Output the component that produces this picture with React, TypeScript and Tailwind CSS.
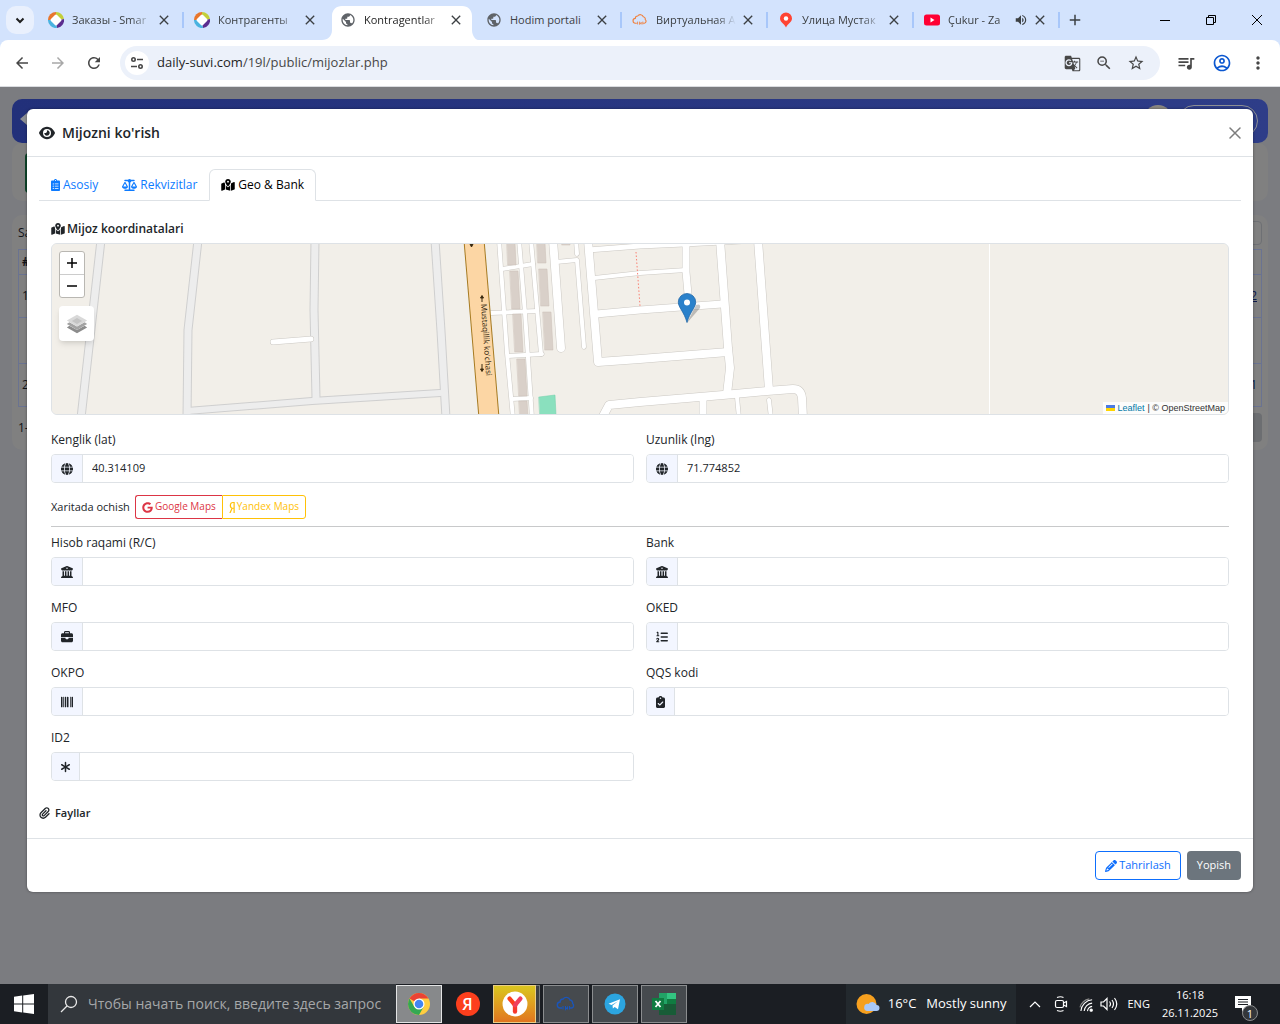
import type { ReactNode } from 'react';
import clsx from 'clsx';
import type { IconType } from 'react-icons';
import {
  FaAsterisk,
  FaBarcode,
  FaBriefcase,
  FaBuildingColumns,
  FaClipboardCheck,
  FaEye,
  FaGlobe,
  FaGoogle,
  FaListOl,
  FaMapLocationDot,
  FaPaperclip,
  FaPencil,
  FaScaleBalanced,
  FaYandex,
} from 'react-icons/fa6';
import { FaClipboardList } from 'react-icons/fa';
import {
  MdAdd,
  MdArrowBack,
  MdArrowForward,
  MdClose,
  MdGTranslate,
  MdMoreVert,
  MdOutlineAccountCircle,
  MdPublic,
  MdQueueMusic,
  MdRefresh,
  MdStarBorder,
  MdVolumeUp,
  MdZoomOut,
} from 'react-icons/md';

/* ---------- Browser tabs ---------- */

function SmartupIcon() {
  return (
    <svg viewBox="0 0 16 16" className="size-4">
      <path d="M0 8a8 8 0 0 1 8-8v4L4 8z" fill="#e8762d" />
      <path d="M8 0a8 8 0 0 1 8 7l-4 1-4-4z" fill="#c3cf3a" />
      <path d="M16 7a8 8 0 0 1-7 9l-1-4 4-4z" fill="#5b2d90" />
      <path d="M9 16a8 8 0 0 1-9-8l4 0 4 4z" fill="#4ab3e0" />
      <path d="M8 4l4 4-4 4-4-4z" fill="#fff" stroke="#fff" strokeWidth="3" strokeLinejoin="round" />
    </svg>
  );
}

function CloudIcon({ color }: { color: string }) {
  return (
    <svg viewBox="0 0 20 20" className="size-full" fill="none" stroke={color} strokeWidth="1.4">
      <path d="M6 14H4.500a3 3 0 0 1-.4-6 3 3 0 0 1 3-3 4 4 0 0 1 7 1 3 3 0 0 1 2.500 3.500A2.500 2.500 0 0 1 15.500 14H14" />
      <path d="M7 12v3.500M9.500 12v3.500l2-2.500v2.500M13.500 12v3.500" strokeWidth="1.100" />
    </svg>
  );
}

function PinIcon() {
  return (
    <svg viewBox="0 0 16 16" className="size-4">
      <path d="M8 .500a6 6 0 0 1 6 6c0 4-4.500 5-6 9-1.500-4-6-5-6-9a6 6 0 0 1 6-6z" fill="#ff4433" />
      <circle cx="8" cy="6.500" r="2.200" fill="#fff" />
    </svg>
  );
}

function YoutubeIcon() {
  return (
    <svg viewBox="0 0 16 16" className="size-4">
      <rect y="2.500" width="16" height="11" rx="2.500" fill="#f03" />
      <path d="M6.500 5.500v5l4-2.500z" fill="#fff" />
    </svg>
  );
}

interface BrowserTab {
  title: string;
  icon: ReactNode;
  active?: boolean;
  sound?: boolean;
  divider?: boolean;
}

const browserTabs: BrowserTab[] = [
  { title: 'Заказы - Smar', icon: <SmartupIcon />, divider: true },
  { title: 'Контрагенты', icon: <SmartupIcon /> },
  { title: 'Kontragentlar', icon: <MdPublic className="size-4 text-[#5f6368]" />, active: true },
  { title: 'Hodim portali', icon: <MdPublic className="size-4 text-[#5f6368]" />, divider: true },
  { title: 'Виртуальная А', icon: <CloudIcon color="#f0803c" />, divider: true },
  { title: 'Улица Мустак', icon: <PinIcon />, divider: true },
  { title: 'Çukur - Za', icon: <YoutubeIcon />, sound: true, divider: true },
];

function TabStrip() {
  return (
    <div className="flex h-10 items-stretch bg-[#d3e3fd] text-[11px] text-[#3c4043]">
      <button aria-label="Search tabs" className="m-[6px] mr-1 grid size-7 place-items-center rounded-[10px] bg-[#e9f0fd]">
        <svg viewBox="0 0 10 10" className="size-[10px]" fill="none" stroke="#1f1f1f" strokeWidth="2">
          <path d="M1.500 3.500L5 7l3.500-3.500" />
        </svg>
      </button>
      {browserTabs.map((tab) => (
        <div key={tab.title} className="relative flex max-w-[146px] min-w-0 flex-1">
          {tab.active && (
            <svg viewBox="0 0 156 34" preserveAspectRatio="none" className="absolute -left-2 bottom-0 h-[34px] w-[156px]">
              <path d="M0 34c6 0 10-4 10-10V10C10 4 14 0 20 0h120c6 0 10 4 10 10v14c0 6 4 10 6 10z" fill="#fff" />
            </svg>
          )}
          <div className="relative flex min-w-0 flex-1 items-center pl-[10px] pr-3">
            <span className="size-4 shrink-0">{tab.icon}</span>
            <span
              className={clsx(
                'ml-2 min-w-0 flex-1 overflow-hidden whitespace-nowrap',
                tab.title !== 'Hodim portali' && '[mask-image:linear-gradient(to_right,#000_75%,transparent)]',
                tab.active && 'text-[#1f1f1f]',
              )}
            >
              {tab.title}
            </span>
            {tab.sound && <MdVolumeUp className="size-[14px] shrink-0" />}
            <button aria-label="Close tab" className="ml-1 shrink-0">
              <MdClose className="size-4" />
            </button>
          </div>
          {tab.divider && <span className="absolute right-0 top-3 h-4 w-[2px] bg-[#a8c7fa]" />}
        </div>
      ))}
      <button aria-label="New tab" className="grid w-[30px] place-items-center">
        <MdAdd className="size-[18px]" />
      </button>
      <div className="ml-auto flex text-black">
        <button aria-label="Minimize" className="grid w-[46px] place-items-center">
          <span className="h-px w-[10px] bg-black" />
        </button>
        <button aria-label="Restore" className="grid w-[46px] place-items-center">
          <svg viewBox="0 0 10 10" className="size-[10px]" fill="none" stroke="currentColor">
            <path d="M.500 2.500h7v7h-7zM2.500 2.500v-2h7v7h-2" />
          </svg>
        </button>
        <button aria-label="Close" className="grid w-[46px] place-items-center">
          <svg viewBox="0 0 10 10" className="size-[10px]" stroke="currentColor">
            <path d="M0 0l10 10M10 0L0 10" />
          </svg>
        </button>
      </div>
    </div>
  );
}

function IconButton({ label, className, children }: { label: string; className?: string; children: ReactNode }) {
  return (
    <button aria-label={label} className={clsx('grid h-8 shrink-0 place-items-center', className ?? 'w-9')}>
      {children}
    </button>
  );
}

function Toolbar() {
  return (
    <div className="bg-[#d3e3fd]">
      <div className="flex h-[47px] items-center rounded-t-lg border-b border-[#dadce0] bg-white px-1 text-[#474747]">
        <IconButton label="Back"><MdArrowBack className="size-[18px]" /></IconButton>
        <IconButton label="Forward"><MdArrowForward className="size-[18px] text-[#a8a8a8]" /></IconButton>
        <IconButton label="Reload"><MdRefresh className="size-[18px]" /></IconButton>
        <div className="mx-2 flex h-[34px] min-w-0 flex-1 items-center rounded-full bg-[#ecf1fa] px-[5px] pr-2">
          <button aria-label="Site information" className="grid size-6 shrink-0 place-items-center rounded-full bg-white">
            <svg viewBox="0 0 14 14" className="size-[14px]" fill="none" stroke="#474747" strokeWidth="1.600">
              <circle cx="3.500" cy="3.500" r="1.700" />
              <path d="M7 3.500h6M1 10.500h6" />
              <circle cx="10.500" cy="10.500" r="1.700" />
            </svg>
          </button>
          <span className="ml-2 flex-1 overflow-hidden whitespace-nowrap text-[13px] text-[#474747]">
            <span className="text-[#1f1f1f]">daily-suvi.com</span>/19l/public/mijozlar.php
          </span>
          <IconButton label="Translate" className="w-8"><MdGTranslate className="size-[17px]" /></IconButton>
          <IconButton label="Zoom" className="w-8"><MdZoomOut className="size-[18px]" /></IconButton>
          <IconButton label="Bookmark" className="w-8"><MdStarBorder className="size-[18px]" /></IconButton>
        </div>
        <IconButton label="Media"><MdQueueMusic className="size-5" /></IconButton>
        <IconButton label="Profile"><MdOutlineAccountCircle className="size-5 text-[#0b57d0]" /></IconButton>
        <IconButton label="Menu"><MdMoreVert className="size-5" /></IconButton>
      </div>
    </div>
  );
}

/* ---------- Dimmed page under the dialog ---------- */

function Backdrop() {
  return (
    <div className="px-3 pt-3 text-xs text-[#111318]" aria-hidden="true">
      <div className="flex h-11 justify-between rounded-[10px] bg-gradient-to-r from-[#22307a] to-[#2e3d88] pl-2 pr-[10px]">
        <svg viewBox="0 0 20 16" className="mt-3 h-4 w-5" fill="#8d8f94">
          <path d="M0 8l7-6v4h12v4H7v4z" />
        </svg>
        <div className="flex gap-[6px] pt-[6px]">
          <span className="h-7 w-7 rounded-full bg-[#8a8780]" />
          <span className="h-8 w-20 rounded-full border border-[#8d8f94]" />
        </div>
      </div>
      <div className="h-[58px] rounded-[10px] bg-[#808080] px-[13px] pt-[10px]">
        <div className="h-10 w-20 rounded bg-[#0d4429]" />
      </div>
      <div className="mt-[14px] rounded-[10px] bg-[#808080] px-[6px] pb-2 pt-1">
        <div className="flex h-7 items-center justify-between">
          <span>Sa</span>
          <span className="h-6 w-20 rounded border border-[#6e7074]" />
        </div>
        <table className="mt-[2px] w-full border border-[#6a7391]">
          <tbody>
            <tr className="h-[25px] border-b border-[#6a7391] font-bold"><td className="pl-[3px]">#</td></tr>
            <tr className="h-[43px] border-b border-[#6a7391]"><td className="pl-[3px]">1</td><td className="pr-1 text-right text-[#0d1a4d] underline">2</td></tr>
            <tr className="h-[46px] border-b border-[#6a7391]"><td /></tr>
            <tr className="h-[43px]"><td className="pl-[3px]">2</td><td className="pr-1 text-right text-[#0d1a4d]">1</td></tr>
          </tbody>
        </table>
        <div className="mt-[6px] flex h-[29px] items-center justify-between">
          <span>1-</span>
          <span className="h-[29px] w-10 rounded bg-[#6c6e71]" />
        </div>
      </div>
    </div>
  );
}

/* ---------- Map ---------- */

const greyRoads = [
  { d: 'M101 240L81 418', w: 8 },
  { d: 'M198 240L188 330L187 418', w: 8 },
  { d: 'M315 240L314 310L316 398', w: 8 },
  { d: 'M435 240L441 331L446 418', w: 8 },
  { d: 'M187 411L312 401L440 393', w: 7 },
];

const whiteRoads = [
  { d: 'M273 342L311 339', w: 5 },
  { d: 'M499 240L507 353L513 418', w: 4 },
  { d: 'M519 240L525 313L532 418', w: 4 },
  { d: 'M531 240L541 354', w: 4 },
  { d: 'M502 269L533 264', w: 4 },
  { d: 'M491 313L537 311', w: 4 },
  { d: 'M508 356L542 354', w: 4 },
  { d: 'M512 399L531 398', w: 4 },
  { d: 'M553 240L561 348', w: 8 },
  { d: 'M556 262L577 260L584 347', w: 4 },
  { d: 'M576 240L577 254', w: 4 },
  { d: 'M588 240L598 362L640 359L728 352', w: 8 },
  { d: 'M588 250L640 246L684 244L742 241', w: 5 },
  { d: 'M594 278L640 273L686 270', w: 4 },
  { d: 'M596 314L640 310L722 304', w: 7 },
  { d: 'M686 242L686 272L689 305', w: 7 },
  { d: 'M720 240L728 348L730 368L727 394', w: 8 },
  { d: 'M758 240L769 390', w: 8 },
  { d: 'M602 418L609 405L640 402L723 395L767 391L793 389Q801 389 802 398L803 418', w: 8 },
  { d: 'M703 400L703 418', w: 7 },
  { d: 'M737 397L739 418', w: 4 },
  { d: 'M769 400L771 418', w: 4 },
];

const buildings = [
  'M507 243h8l1 22h-8z',
  'M510 271h8l2 38h-8z',
  'M513 314h8l2 38h-8z',
  'M517 359h8l2 37h-8z',
  'M519 401h8l1 16h-8z',
  'M537 243h8l1 20h-8z',
  'M539 269h8l2 37h-8z',
  'M543 312h8l2 38h-8z',
  'M562 240h8v5h-8z',
];

function MapCanvas() {
  return (
    <svg viewBox="52 244 1176 170" preserveAspectRatio="xMidYMid slice" className="block size-full" fill="none">
      <rect x="52" y="244" width="1176" height="170" fill="#f2efe9" />
      <g strokeLinecap="round" strokeLinejoin="round">
        {greyRoads.map((r) => <path key={r.d} d={r.d} stroke="#cfcfcf" strokeWidth={r.w + 1} />)}
        {greyRoads.map((r) => <path key={r.d} d={r.d} stroke="#ededed" strokeWidth={r.w - 1} />)}
        {whiteRoads.map((r) => <path key={r.d} d={r.d} stroke="#cbc8c3" strokeWidth={r.w + 1} />)}
        {whiteRoads.map((r) => <path key={r.d} d={r.d} stroke="#fff" strokeWidth={r.w} />)}
        {buildings.map((d) => <path key={d} d={d} fill="#d9d0c9" stroke="#cabfb6" strokeWidth=".500" />)}
        <path d="M539 397l16-2 1 20h-16z" fill="#8ae0be" stroke="#6fcfa9" strokeWidth=".500" />
      </g>
      <path d="M474 240L489 418" stroke="#a67a20" strokeWidth="21" />
      <path d="M474 240L489 418" stroke="#fcd6a4" strokeWidth="19" />
      <path d="M636 252L640 306" stroke="#fa8072" strokeDasharray="1.500 2" />
      <path d="M989.500 244V414" stroke="#fff" />
      <g stroke="#3a2a10" fill="#3a2a10">
        <path d="M482 302V297M480.500 298L482 295.500L483.500 298z" />
        <path d="M482 364V369M480.500 369L482 371.500L483.500 369z" />
        <path d="M470 244L473 244L471.500 247z" />
      </g>
      <text transform="translate(481 304) rotate(86)" fill="#2b2009" className="font-['Open_Sans',sans-serif] text-[8px]">
        Mustaqillik ko'chasi
      </text>
      <path d="M687 323L700 308Q701 303 696 305Z" fill="#000" opacity=".22" />
      <path d="M687 293.500a8.700 8.700 0 0 1 8.700 8.700c0 5-6 10-8.700 20.300-2.700-10.300-8.700-15.300-8.700-20.300a8.700 8.700 0 0 1 8.700-8.700z" fill="#2a81cb" stroke="#2569a8" strokeWidth=".800" />
      <circle cx="687" cy="302.500" r="3" fill="#fff" />
    </svg>
  );
}

function LeafletMap() {
  return (
    <div className="relative h-[172px] overflow-hidden rounded-md border border-[#dee2e6] bg-[#f2efe9]">
      <MapCanvas />
      <div className="absolute left-[7px] top-[7px] flex flex-col">
        <div className="flex w-[26px] flex-col overflow-hidden rounded-[3px] border border-[#b9b7b2] bg-white text-black">
          <button aria-label="Zoom in" className="grid h-[23px] place-items-center border-b border-[#ccc]">
            <svg viewBox="0 0 10 10" className="size-[10px]" stroke="currentColor" strokeWidth="1.500"><path d="M0 5h10M5 0v10" /></svg>
          </button>
          <button aria-label="Zoom out" className="grid h-[22px] place-items-center">
            <svg viewBox="0 0 10 10" className="size-[10px]" stroke="currentColor" strokeWidth="1.300"><path d="M0 5h10" /></svg>
          </button>
        </div>
        <button aria-label="Layers" className="mt-2 grid size-[35px] place-items-center rounded bg-white shadow-md">
          <svg viewBox="0 0 26 26" className="size-[22px]">
            <path d="M1 17l12 7 12-7-3-2-9 5-9-5z" fill="#8c8c8c" />
            <path d="M1 13l12 7 12-7-3-2-9 5-9-5z" fill="#a3a3a3" />
            <path d="M13 2l12 7-12 7L1 9z" fill="#d9d9d9" />
            <path d="M13 6l6 3.500-6 3.500-6-3.500z" fill="#c4c4c4" />
          </svg>
        </button>
      </div>
      <div className="absolute bottom-0 right-0 flex h-3 items-center bg-white/80 px-[3px] font-['Liberation_Sans',Arial,sans-serif] text-[9px] text-[#333]">
        <svg viewBox="0 0 9 6" className="mr-[2px] h-[6px] w-[9px]">
          <path fill="#4c7be1" d="M0 0h9v3H0z" />
          <path fill="#ffd500" d="M0 3h9v3H0z" />
        </svg>
        <a href="#leaflet" className="text-[#0078a8]">Leaflet</a>
        <span className="ml-[3px]">| © OpenStreetMap</span>
      </div>
    </div>
  );
}

/* ---------- Dialog ---------- */

interface FieldProps {
  id: string;
  label: string;
  icon: IconType;
  value?: string;
  narrow?: boolean;
}

function Field({ id, label, icon: Icon, value = '', narrow }: FieldProps) {
  return (
    <div>
      <label htmlFor={id} className="mb-[5px] block leading-[18px]">{label}</label>
      <div className="flex h-[29px] overflow-hidden rounded border border-[#dee2e6]">
        <span className="flex items-center border-r border-[#dee2e6] bg-[#f3f6ff] px-[9px]">
          <Icon className={clsx('h-3', narrow ? 'w-[9px]' : 'w-3')} />
        </span>
        <input id={id} type="text" readOnly defaultValue={value} className="min-w-0 flex-1 bg-white px-[9px] text-[11px] outline-none" />
      </div>
    </div>
  );
}

const coordFields: FieldProps[] = [
  { id: 'lat', label: 'Kenglik (lat)', icon: FaGlobe, value: '40.314109' },
  { id: 'lng', label: 'Uzunlik (lng)', icon: FaGlobe, value: '71.774852' },
];

const bankFields: FieldProps[] = [
  { id: 'rc', label: 'Hisob raqami (R/C)', icon: FaBuildingColumns },
  { id: 'bank', label: 'Bank', icon: FaBuildingColumns },
  { id: 'mfo', label: 'MFO', icon: FaBriefcase },
  { id: 'oked', label: 'OKED', icon: FaListOl },
  { id: 'okpo', label: 'OKPO', icon: FaBarcode },
  { id: 'qqs', label: 'QQS kodi', icon: FaClipboardCheck, narrow: true },
  { id: 'id2', label: 'ID2', icon: FaAsterisk, narrow: true },
];

const tabs = [
  { label: 'Asosiy', icon: FaClipboardList, iconClass: 'w-[9px]' },
  { label: 'Rekvizitlar', icon: FaScaleBalanced, iconClass: 'w-[15px]' },
  { label: 'Geo & Bank', icon: FaMapLocationDot, iconClass: 'w-[14px]', active: true },
];

function CustomerDialog() {
  return (
    <div role="dialog" aria-labelledby="dialog-title" className="absolute inset-x-[27px] top-[22px] rounded-md bg-white text-xs text-[#212529] shadow-[0_0_3px_rgba(0,0,0,0.4)]">
      <div className="flex h-12 items-center border-b border-[#dee2e6] px-3">
        <FaEye className="size-4" />
        <h5 id="dialog-title" className="ml-[7px] text-sm font-semibold">Mijozni ko'rish</h5>
        <button aria-label="Close" className="ml-auto grid w-3 place-items-center text-[#7d7d7d]">
          <svg viewBox="0 0 12 12" className="size-3" stroke="currentColor" strokeWidth="1.500" strokeLinecap="round"><path d="M1 1l10 10M11 1L1 11" /></svg>
        </button>
      </div>

      <div className="px-3 pt-3">
        <div role="tablist" className="flex h-8 border-b border-[#dee2e6]">
          {tabs.map(({ label, icon: Icon, iconClass, active }) => (
            <button
              key={label}
              role="tab"
              aria-selected={!!active}
              className={clsx(
                '-mb-px flex items-center gap-[3px] rounded-t-md border px-[11px]',
                active ? 'border-[#dee2e6] border-b-white bg-white text-black' : 'border-transparent text-[#0d7bff]',
              )}
            >
              <Icon className={clsx('h-3', iconClass)} />
              {label}
            </button>
          ))}
        </div>

        <div className="px-3 pt-[19px]">
          <h6 className="mb-[5px] flex items-center gap-[2px] font-semibold leading-[18px]">
            <FaMapLocationDot className="h-3 w-[14px]" />
            Mijoz koordinatalari
          </h6>
          <LeafletMap />
          <div className="mt-4 grid grid-cols-2 gap-x-3">
            {coordFields.map((f) => <Field key={f.id} {...f} />)}
          </div>
          <div className="mt-3 flex h-6 items-center gap-[5px] text-[11px]">
            Xaritada ochish
            <div className="flex h-6 text-[10px]">
              <a href="#google" className="flex items-center gap-[2px] rounded-l-[3px] border border-r-0 border-[#dc3545] px-[6px] text-[#dc3545]">
                <FaGoogle className="size-[11px]" />
                Google Maps
              </a>
              <a href="#yandex" className="flex items-center gap-[2px] rounded-r-[3px] border border-[#ffc107] px-[6px] text-[#ffc107]">
                <FaYandex className="h-[11px] w-[6px]" />
                Yandex Maps
              </a>
            </div>
          </div>
          <hr className="my-[7px] border-[#c8c9ca]" />
          <div className="grid grid-cols-2 gap-x-3 gap-y-[13px]">
            {bankFields.map((f) => <Field key={f.id} {...f} />)}
          </div>
        </div>

        <h6 className="mb-4 mt-[23px] flex items-center gap-[5px] text-[11px] font-semibold leading-[18px]">
          <FaPaperclip className="h-3 w-[11px]" />
          Fayllar
        </h6>
      </div>

      <div className="flex justify-end gap-[6px] border-t border-[#dee2e6] p-3 text-[11px]">
        <button className="flex h-[29px] items-center gap-[2px] rounded border border-[#0d6efd] px-[9px] text-[#0d6efd]">
          <FaPencil className="size-3" />
          Tahrirlash
        </button>
        <button className="h-[29px] rounded bg-[#6c757d] px-[10px] text-white">Yopish</button>
      </div>
    </div>
  );
}

/* ---------- Taskbar ---------- */

function ChromeLogo() {
  return (
    <svg viewBox="0 0 24 24" className="size-6">
      <circle cx="12" cy="12" r="11" fill="#ffcd40" />
      <path d="M12 12L2.500 6.500A11 11 0 0 1 21.500 6.500H12z" fill="#ea4335" />
      <path d="M2.500 6.500A11 11 0 0 0 12 23l4.700-8.300L12 17l-4.700-2.300z" fill="#34a853" />
      <circle cx="12" cy="12" r="5.500" fill="#fff" />
      <circle cx="12" cy="12" r="4.300" fill="#4285f4" />
    </svg>
  );
}

function TaskButton({ label, className, children }: { label: string; className: string; children: ReactNode }) {
  return (
    <button aria-label={label} className={clsx('grid h-[38px] place-items-center border', className)}>
      {children}
    </button>
  );
}

function Taskbar() {
  return (
    <div className="flex h-10 items-center bg-[#1b1e23] text-white">
      <button aria-label="Start" className="grid w-12 place-items-center">
        <svg viewBox="0 0 20 20" className="size-5" fill="#fff">
          <path d="M0 2.800l8.200-1.200v7.900H0zM9.200 1.500L20 0v9.500H9.200zM0 10.500h8.200v7.900L0 17.200zM9.200 10.500H20V20L9.200 18.500z" />
        </svg>
      </button>
      <label className="flex h-10 w-[348px] items-center bg-[#33373c]">
        <svg viewBox="0 0 18 18" className="ml-3 size-[18px] shrink-0" fill="none" stroke="#e8e8e8" strokeWidth="1.300">
          <circle cx="11" cy="7" r="5.500" />
          <path d="M7 11L1 17" />
        </svg>
        <input
          type="text"
          aria-label="Поиск"
          placeholder="Чтобы начать поиск, введите здесь запрос"
          className="ml-[10px] min-w-0 flex-1 bg-transparent text-sm outline-none placeholder:text-[#a5a7a9]"
        />
      </label>
      <TaskButton label="Chrome" className="w-[46px] border-[#e3e4e5] bg-[#87898b]"><ChromeLogo /></TaskButton>
      <TaskButton label="Яндекс" className="w-[51px] border-transparent">
        <span className="grid size-6 place-items-center rounded-full bg-[#fc3f1d] text-base leading-none font-semibold">Я</span>
      </TaskButton>
      <TaskButton label="Yandex Browser" className="w-[43px] border-[#e9cd86] bg-gradient-to-b from-[#d9c61f] to-[#e0751f]">
        <svg viewBox="0 0 24 24" className="size-[26px]" fill="none" strokeWidth="4" strokeLinecap="round">
          <circle cx="12" cy="12" r="11.500" fill="#fff" />
          <path d="M12 13V19" stroke="#f7392b" />
          <path d="M7 7l5 6" stroke="#fc3f1d" />
          <path d="M17 7l-5 6" stroke="#f0405c" />
        </svg>
      </TaskButton>
      <span className="mr-[3px] h-[38px] w-1 border-y border-r border-[#777a7c] bg-[#3c3f43]" />
      <div className="flex gap-[3px]">
        <TaskButton label="SIP" className="w-[46px] border-[#8b8d8f] bg-[#464a4e]">
          <span className="size-5"><CloudIcon color="#1b55b8" /></span>
        </TaskButton>
        <TaskButton label="Telegram" className="w-[46px] border-[#8b8d8f] bg-[#464a4e]">
          <svg viewBox="0 0 22 22" className="size-[22px]">
            <circle cx="11" cy="11" r="10.500" fill="#2ca5e0" />
            <path d="M4.500 10.800L16 6.300l-2 9.900-3.300-2.300-1.800 1.600-.4-3L14 8.200 7.500 12z" fill="#fff" />
          </svg>
        </TaskButton>
        <TaskButton label="Excel" className="w-[46px] border-[#8b8d8f] bg-[#464a4e]">
          <svg viewBox="0 0 24 22" className="h-[22px] w-6">
            <path d="M7 0h17v22H7z" fill="#185c37" />
            <path d="M7 0h8v11H7z" fill="#21a366" />
            <path d="M15 0h9v6h-9z" fill="#33c481" />
            <path d="M15 6h9v5h-9z" fill="#107c41" />
            <path d="M0 5h12v12H0z" fill="#107c41" />
            <path d="M3.500 8l5 6M8.500 8l-5 6" stroke="#fff" strokeWidth="1.800" />
          </svg>
        </TaskButton>
      </div>

      <div className="ml-auto flex h-10 items-center bg-[#23292e] px-[10px] text-[13px]">
        <svg viewBox="0 0 24 22" className="mr-2 h-[22px] w-6">
          <circle cx="10.500" cy="11" r="10" fill="#f6a01f" />
          <path d="M11 18h9.500a3 3 0 0 0 0-6 4.500 4.500 0 0 0-8-1 3.500 3.500 0 0 0-1.500 7z" fill="#a9c8f8" />
        </svg>
        <span>16°C</span>
        <span className="ml-[10px]">Mostly sunny</span>
      </div>
      <div className="flex items-center pl-[13px] pr-7 text-[11px]">
        <svg viewBox="0 0 12 8" className="h-2 w-3" fill="none" stroke="#fff" strokeWidth="1.200"><path d="M1 7l5-5 5 5" /></svg>
        <svg viewBox="0 0 16 18" className="ml-3 h-[18px] w-4" fill="none" stroke="#fff" strokeWidth="1.200">
          <rect x="2.500" y="5.500" width="8" height="7" rx="1.500" />
          <path d="M10.500 8l3-1.500v5l-3-1.500M4 2.500q3.500-1.500 6.500 0M4 15.500q3.500 1.500 6.500 0" />
        </svg>
        <svg viewBox="0 0 16 16" className="ml-[10px] size-[15px]" fill="none" stroke="#fff" strokeWidth="1.200">
          <path d="M2 15A13 13 0 0 1 14 3M5.500 15A9.500 9.500 0 0 1 14 6.500M9 15a6 6 0 0 1 5-5" />
          <path d="M1 11A13 13 0 0 1 11 2" stroke="#888" />
          <circle cx="13" cy="14" r="1.200" fill="#fff" />
        </svg>
        <svg viewBox="0 0 18 16" className="ml-[6px] h-4 w-[18px]" fill="none" stroke="#fff" strokeWidth="1.200">
          <path d="M1 6h2.500L7 2.500v11L3.500 10H1zM9.500 5.500q2 2.500 0 5M12 4q3 4 0 8M14.500 2q4.500 6 0 12" />
        </svg>
        <span className="ml-[9px]">ENG</span>
        <div className="ml-3 text-center leading-[18px]">
          <div>16:18</div>
          <div>26.11.2025</div>
        </div>
        <button aria-label="Notifications" className="relative ml-4">
          <svg viewBox="0 0 18 18" className="size-[18px]">
            <path d="M1 1h16v12h-5l-4 4v-4H1z" fill="#fff" />
            <path d="M4 4.500h10M4 7h10M4 9.500h10" stroke="#1b1e23" />
          </svg>
          <span className="absolute -bottom-2 left-2 grid size-4 place-items-center rounded-full border border-[#8a8c8e] bg-[#33363a] leading-none">1</span>
        </button>
      </div>
    </div>
  );
}

export default function App() {
  return (
    <div className="flex min-h-screen flex-col bg-[#7b7c80] font-['Open_Sans','Noto_Sans',sans-serif]">
      <TabStrip />
      <Toolbar />
      <main className="relative min-h-[810px] flex-1">
        <Backdrop />
        <CustomerDialog />
      </main>
      <Taskbar />
    </div>
  );
}
